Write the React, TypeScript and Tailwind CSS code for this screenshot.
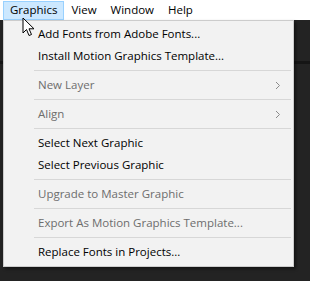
const FONT = { fontFamily: '"Segoe UI", "Open Sans", "Noto Sans", sans-serif' };

type Entry =
  | { kind: "sep" }
  | { kind: "item"; label: string; disabled?: boolean; sub?: boolean };

const ITEMS: Entry[] = [
  { kind: "item", label: "Add Fonts from Adobe Fonts..." },
  { kind: "item", label: "Install Motion Graphics Template..." },
  { kind: "sep" },
  { kind: "item", label: "New Layer", disabled: true, sub: true },
  { kind: "sep" },
  { kind: "item", label: "Align", disabled: true, sub: true },
  { kind: "sep" },
  { kind: "item", label: "Select Next Graphic" },
  { kind: "item", label: "Select Previous Graphic" },
  { kind: "sep" },
  { kind: "item", label: "Upgrade to Master Graphic", disabled: true },
  { kind: "sep" },
  { kind: "item", label: "Export As Motion Graphics Template...", disabled: true },
  { kind: "sep" },
  { kind: "item", label: "Replace Fonts in Projects..." },
];

const MENUS = ["Graphics", "View", "Window", "Help"];

export default function App() {
  return (
    <div className="relative flex h-[281px] w-[310px] flex-col overflow-hidden bg-[#232323] text-[11.5px]" style={FONT}>
      <div className="flex h-[20px] items-center bg-white pl-[3px]">
        {MENUS.map((m, i) => (
          <div
            key={m}
            className={
              i === 0
                ? "flex h-[19px] items-center border border-[#99d1ff] bg-[#cce8ff] px-[6px] text-black"
                : "flex h-[19px] items-center border border-transparent px-[6px] text-black"
            }
          >
            {m}
          </div>
        ))}
      </div>
      <div className="flex-1">
        <div className="mt-[41px] h-[3px] bg-[#151515]" />
      </div>

      <div className="absolute left-[3px] top-[20px] w-[291px] border border-[#cccccc] bg-[#f2f2f2] pt-[2px] pb-[3px] shadow-[2px_2px_3px_rgba(0,0,0,0.45)]">
        {ITEMS.map((e, i) =>
          e.kind === "sep" ? (
            <div key={i} className="flex h-[7px] items-center pl-[30px] pr-[2px]">
              <div className="h-px flex-1 bg-[#d7d7d7]" />
            </div>
          ) : (
            <div
              key={i}
              className={
                e.disabled
                  ? "flex h-[22px] items-center pl-[34px] pr-[12px] text-[#6d6d6d]"
                  : "flex h-[22px] items-center pl-[34px] pr-[12px] text-black"
              }
            >
              <span>{e.label}</span>
              {e.sub && (
                <svg className="ml-auto" width="6" height="9" viewBox="0 0 6 9">
                  <path d="M1 1 L4.5 4.5 L1 8" fill="none" stroke="#8a8a8a" strokeWidth="1" />
                </svg>
              )}
            </div>
          )
        )}
      </div>

      <svg className="absolute left-[22px] top-[17px]" width="14" height="20" viewBox="0 0 14 20">
        <path d="M1 1 L1 16 L4.5 12.5 L7 18.5 L9.5 17.5 L7 11.8 L12 11.8 Z" fill="white" stroke="black" strokeWidth="1" strokeLinejoin="round" />
      </svg>
    </div>
  );
}
